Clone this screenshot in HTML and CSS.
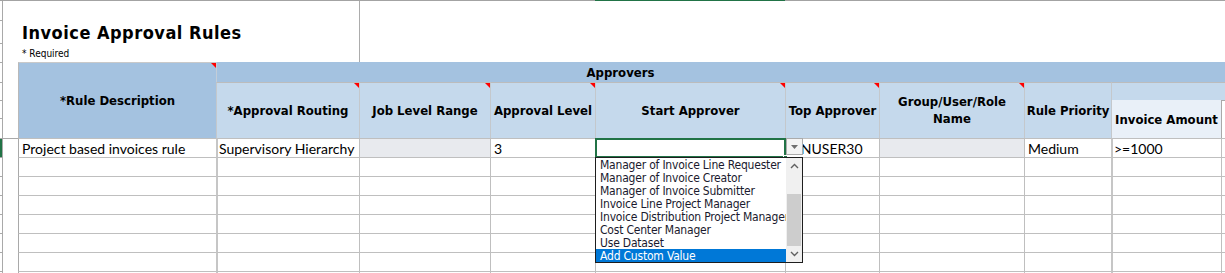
FILE: index.html
```html
<!DOCTYPE html>
<html>
<head>
<meta charset="utf-8">
<link rel="stylesheet" href="styles.css">
</head>
<body>
<div class="sheet">
  <!-- r1 top line -->
  <div class="tl"></div>
  <div class="tl span5"></div>
  <div class="tl green"></div>
  <div class="tl span5"></div>

  <!-- r2-r4 title -->
  <div class="rh first"></div>
  <div class="title-cell">
    <h1 class="title">Invoice Approval Rules</h1>
    <p class="req">* Required</p>
  </div>
  <div class="title-rest"></div>
  <div class="rh"></div>
  <div class="rh"></div>

  <!-- r5 -->
  <div class="rh"></div>
  <div class="hA"></div>
  <div class="hB note">*Rule Description</div>
  <div class="hGroup">Approvers</div>
  <div class="hGroupRest"></div>
  <!-- r6 -->
  <div class="rh"></div>
  <div class="hs c note">*Approval Routing</div>
  <div class="hs note">Job Level Range</div>
  <div class="hs note">Approval Level</div>
  <div class="hs note">Start Approver</div>
  <div class="hs note">Top Approver</div>
  <div class="hs note two">Group/User/Role<br>Name</div>
  <div class="hs">Rule Priority</div>
  <div class="hJtop"></div>
  <div class="hKtop"></div>
  <!-- r7 -->
  <div class="rh"></div>
  <div class="hJ">Invoice Amount</div>
  <div class="hK"></div>
  <!-- r8 -->
  <div class="rh"></div>

  <!-- r9 data row 1 -->
  <div class="rh act"></div>
  <div class="a hdrline"></div>
  <div class="d b">Project based invoices rule</div>
  <div class="d dbl">Supervisory Hierarchy</div>
  <div class="d gray"></div>
  <div class="d">3</div>
  <div class="d active">
    <div class="handle"></div>
    <div class="dd-btn"><svg width="7" height="4" viewBox="0 0 7 4"><path d="M0 0H7L3.5 4Z" fill="#6f6f6f"/></svg></div>
    <div class="dd">
      <ul class="dd-items">
        <li>Manager of Invoice Line Requester</li>
        <li>Manager of Invoice Creator</li>
        <li>Manager of Invoice Submitter</li>
        <li>Invoice Line Project Manager</li>
        <li>Invoice Distribution Project Manager</li>
        <li>Cost Center Manager</li>
        <li>Use Dataset</li>
        <li class="sel">Add Custom Value</li>
      </ul>
      <div class="dd-scroll">
        <div class="arr"><svg width="9" height="6" viewBox="0 0 9 6"><path d="M1 5L4.5 1.5L8 5" fill="none" stroke="#606060" stroke-width="1.4"/></svg></div>
        <div class="track"><div class="thumb"></div></div>
        <div class="arr"><svg width="9" height="6" viewBox="0 0 9 6"><path d="M1 1L4.5 4.5L8 1" fill="none" stroke="#606060" stroke-width="1.4"/></svg></div>
      </div>
    </div>
  </div>
  <div class="d">FINUSER30</div>
  <div class="d gray"></div>
  <div class="d">Medium</div>
  <div class="d dbl">&gt;=1000</div>
  <div class="d"></div>

  <!-- r10 - r16 empty rows -->
  <div class="rh"></div><div class="a"></div><div class="d b"></div><div class="d dbl"></div><div class="d"></div><div class="d"></div><div class="d"></div><div class="d"></div><div class="d"></div><div class="d"></div><div class="d dbl"></div><div class="d"></div>
  <div class="rh"></div><div class="a"></div><div class="d b"></div><div class="d dbl"></div><div class="d"></div><div class="d"></div><div class="d"></div><div class="d"></div><div class="d"></div><div class="d"></div><div class="d dbl"></div><div class="d"></div>
  <div class="rh"></div><div class="a"></div><div class="d b"></div><div class="d dbl"></div><div class="d"></div><div class="d"></div><div class="d"></div><div class="d"></div><div class="d"></div><div class="d"></div><div class="d dbl"></div><div class="d"></div>
  <div class="rh"></div><div class="a"></div><div class="d b"></div><div class="d dbl"></div><div class="d"></div><div class="d"></div><div class="d"></div><div class="d"></div><div class="d"></div><div class="d"></div><div class="d dbl"></div><div class="d"></div>
  <div class="rh"></div><div class="a"></div><div class="d b"></div><div class="d dbl"></div><div class="d"></div><div class="d"></div><div class="d"></div><div class="d"></div><div class="d"></div><div class="d"></div><div class="d dbl"></div><div class="d"></div>
  <div class="rh"></div><div class="a"></div><div class="d b"></div><div class="d dbl"></div><div class="d"></div><div class="d"></div><div class="d"></div><div class="d"></div><div class="d"></div><div class="d"></div><div class="d dbl"></div><div class="d"></div>
  <div class="rh"></div><div class="a"></div><div class="d b"></div><div class="d dbl"></div><div class="d"></div><div class="d"></div><div class="d"></div><div class="d"></div><div class="d"></div><div class="d"></div><div class="d dbl"></div><div class="d"></div>
</div>
</body>
</html>
```

FILE: styles.css
```css
* { box-sizing: border-box; margin: 0; padding: 0; }
html, body { background: #ffffff; }
body {
  width: 1225px;
  height: 273px;
  overflow: hidden;
  font-family: "Lato", "Liberation Sans", sans-serif;
  color: #000;
}

.sheet {
  display: grid;
  grid-template-columns: 3px 15px 198px 143px 131px 105px 190px 94px 145px 87px 110px 4px;
  grid-template-rows: 1px 19px 23px 19px 20px 18px 18px 20px repeat(7, 19px) 2px;
}

/* top line (column header bottom edge) */
.tl { background: #a3a3a3; }
.tl.span5 { grid-column: span 5; }
.tl.green { background: #217346; }

/* row header strip */
.rh {
  border-right: 1px solid #a9a9a9;
  border-top: 1px solid #a9a9a9;
}
.rh.first { border-top: none; }
.rh.act { background: linear-gradient(to right, #217346 0 2px, transparent 2px); }

/* title */
.title-cell {
  grid-column: 2 / 5;
  grid-row: span 3;
  padding: 21px 0 0 19px;
  display: flex;
  flex-direction: column;
}
.title {
  font-family: "DejaVu Sans Condensed", "DejaVu Sans", sans-serif;
  font-stretch: condensed;
  font-weight: bold;
  font-size: 18px;
  letter-spacing: 0.5px;
  line-height: 22px;
}
.title-rest {
  grid-column: 5 / 13;
  grid-row: span 3;
  border-left: 1px solid #acacac;
}
.req {
  font-family: "DejaVu Sans Condensed", "DejaVu Sans", sans-serif;
  font-stretch: condensed;
  font-size: 10px;
  line-height: 12px;
  margin-top: 4px;
}

/* headers */
.hA { grid-row: span 4; }
.hB, .hGroup, .hs, .hJ {
  font-family: "DejaVu Sans Condensed", "DejaVu Sans", sans-serif;
  font-stretch: condensed;
  font-weight: bold;
  font-size: 13px;
  display: flex;
  align-items: center;
  justify-content: center;
  text-align: center;
  white-space: nowrap;
}
.hB {
  grid-row: span 4;
  background: #a4c2e0;
  border-left: 1px solid #b9b9b9;
  border-top: 1px solid #c9c9c9;
}
.hGroup {
  grid-column: span 6;
  background: #a4c2e0;
  border-left: 1px solid #c3cdd8;
  padding-top: 1px;
}
.hGroupRest {
  grid-column: span 3;
  background: #a4c2e0;
}
.hs {
  grid-row: span 3;
  background: #c5d9ec;
  border-top: 1px solid #bcbcbc;
  border-left: 1px solid #c4c8cc;
}
.hs.two { line-height: 16.5px; }
.hJtop {
  background: #c5d9ec;
  border-top: 1px solid #bcbcbc;
  border-left: 1px solid #c4c8cc;
}
.hKtop {
  background: #c5d9ec;
  border-top: 1px solid #bcbcbc;
}
.hJ {
  grid-row: span 2;
  background: #e9f0f8;
  border-left: 1px solid #c4c8cc;
}
.hK {
  grid-row: span 2;
  background: #ffffff;
  border-left: 1px solid #a9a9a9;
  border-top: 1px solid #a9a9a9;
}

.note { position: relative; }
.note::after {
  content: "";
  position: absolute;
  top: 0;
  right: 0;
  border-style: solid;
  border-width: 0 5px 5px 0;
  border-color: transparent #ff0000 transparent transparent;
}

/* data cells */
.a.hdrline { border-top: 1px solid #a9a9a9; }
.d {
  border-top: 1px solid #bfbfbf;
  border-left: 1px solid #bfbfbf;
  font-size: 14px;
  line-height: 18px;
  padding: 1px 0 0 3px;
  white-space: nowrap;
  overflow: hidden;
}
.d.b { border-left-color: #a9a9a9; }
.d.dbl {
  border-left: 2px solid #c6c6c6;
  padding-left: 1px;
}
.d.gray { background: #e8eaee; }

/* active cell with dropdown */
.d.active {
  position: relative;
  overflow: visible;
  z-index: 5;
}
.d.active::before {
  content: "";
  position: absolute;
  left: -1px;
  top: -1px;
  right: -1px;
  bottom: -1px;
  border: 2px solid #217346;
}
.handle {
  position: absolute;
  right: -3px;
  bottom: -3px;
  width: 5px;
  height: 5px;
  background: #217346;
  border: 1px solid #fff;
}
.dd-btn {
  position: absolute;
  left: 190px;
  top: -1px;
  width: 17px;
  height: 17px;
  background: #f4f4f4;
  border: 1px solid #ababab;
  display: flex;
  align-items: center;
  justify-content: center;
}
.dd {
  position: absolute;
  left: -1px;
  top: 18px;
  width: 208px;
  height: 106px;
  border: 1px solid #1e1e1e;
  background: #fff;
  display: flex;
}
.dd-items {
  list-style: none;
  width: 190px;
  overflow: hidden;
  font-family: "DejaVu Sans Condensed", "DejaVu Sans", sans-serif;
  font-stretch: condensed;
  font-size: 12px;
  letter-spacing: -0.2px;
  color: #1a1a2e;
}
.dd-items li {
  height: 13px;
  line-height: 13px;
  padding: 1px 0 0 4px;
  white-space: nowrap;
}
.dd-items li.sel {
  background: #0078d7;
  color: #fff;
}
.dd-scroll {
  width: 16px;
  background: #f0f0f0;
  display: flex;
  flex-direction: column;
}
.arr {
  height: 16px;
  display: flex;
  align-items: center;
  justify-content: center;
}
.track {
  flex: 1;
  padding-top: 20px;
  display: flex;
  flex-direction: column;
}
.thumb {
  flex: 1;
  margin: 0 1px;
  background: #cdcdcd;
}
```
